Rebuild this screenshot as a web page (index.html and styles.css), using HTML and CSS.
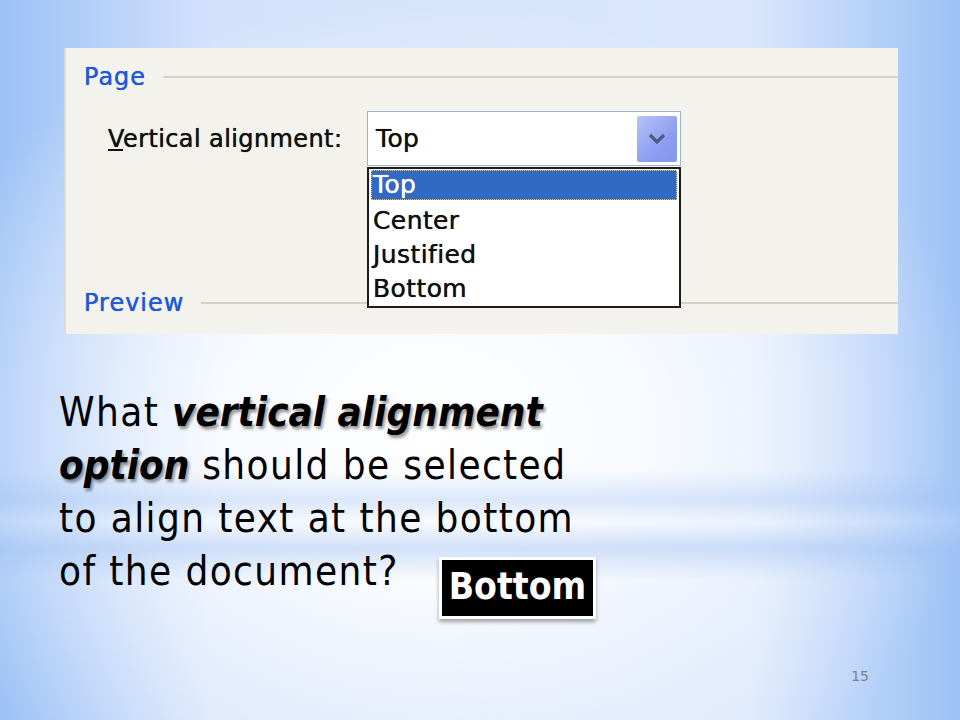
FILE: index.html
```html
<!DOCTYPE html>
<html lang="en">
<head>
<meta charset="UTF-8">
<title>Vertical alignment</title>
<link rel="stylesheet" href="styles.css">
</head>
<body>
    <div class="slide">
        <div class="dialog">
            <div class="group-title">
                <span>Page</span>
                <div class="group-line"></div>
            </div>
            <div class="field-row">
                <label class="field-label"><u>V</u>ertical alignment:</label>
                <div class="combo">
                    <span class="combo-value">Top</span>
                    <div class="combo-button">
                        <svg width="20" height="14" viewBox="0 0 20 14">
                            <path d="M3 3 L10 10 L17 3" fill="none" stroke="#4a5a80" stroke-width="3.2"/>
                        </svg>
                    </div>
                </div>
            </div>
            <div class="group-title preview-title">
                <span>Preview</span>
                <div class="group-line"></div>
            </div>

            <!-- open list of the combo box, drawn over the Preview line -->
            <ul class="combo-list">
                <li class="selected">Top</li>
                <li>Center</li>
                <li>Justified</li>
                <li>Bottom</li>
            </ul>
        </div>

        <p class="question">
            What <em>vertical alignment</em><br>
            <em>option</em> should be selected<br>
            to align text at the bottom<br>
            of the document?<span class="answer">Bottom</span>
        </p>

        <div class="slide-number">15</div>
    </div>
</body>
</html>
```

FILE: styles.css
```css
:root {
    --dialog-bg: #f3f2ec;
    --xp-blue: #2257d6;
    --select-blue: #316ac5;
    --ui-font: "DejaVu Sans", sans-serif;
}

body {
    margin: 0;
    background: #cfdffa;
}

.slide {
    width: 960px;
    height: 720px;
    box-sizing: border-box;
    padding-top: 48px;
    display: flex;
    flex-direction: column;
    overflow: hidden;
    background:
        linear-gradient(to bottom, rgba(255,255,255,0) 470px, rgba(160,192,242,0.35) 500px, rgba(235,242,253,0.15) 522px, rgba(160,192,242,0.45) 548px, rgba(255,255,255,0) 580px),
        radial-gradient(ellipse 560px 430px at 430px 430px, #ffffff 0%, rgba(255,255,255,0.85) 35%, rgba(255,255,255,0) 100%),
        linear-gradient(to right, #9cc1f6 0%, #d3e2fb 22%, #dae7fc 78%, #9cc1f6 100%);
}

/* screenshot of the Page Setup dialog */
.dialog {
    position: relative;
    margin-left: 64px;
    width: 834px;
    height: 286px;
    box-sizing: border-box;
    padding-top: 16px;
    background: var(--dialog-bg);
    border-left: 2px solid #dcdbd3;
    font-family: var(--ui-font);
    letter-spacing: 0.4px;
    text-shadow: 0 0 0.7px currentColor;
}

.group-title {
    display: flex;
    align-items: center;
    padding-left: 18px;
    font-size: 24px;
    line-height: 26px;
    letter-spacing: 1px;
    color: var(--xp-blue);
}

.group-line {
    flex: 1;
    height: 2px;
    margin-left: 17px;
    background: #d3d2c6;
}

.field-row {
    display: flex;
    align-items: center;
    margin-top: 21px;
    padding-left: 42px;
}

.field-label {
    width: 259px;
    font-size: 24px;
    color: #111;
}

.combo {
    display: flex;
    align-items: center;
    justify-content: space-between;
    width: 314px;
    height: 55px;
    box-sizing: border-box;
    padding: 0 3px 0 8px;
    background: #fff;
    border: 1px solid #9db2cc;
}

.combo-value {
    font-size: 25px;
    color: #111;
}

.combo-button {
    display: flex;
    align-items: center;
    justify-content: center;
    width: 40px;
    height: 46px;
    border-radius: 2px;
    background: linear-gradient(135deg, #b7c3f8 0%, #8e9ef1 60%, #8495ec 100%);
}

.preview-title {
    margin-top: 124px;
}

.combo-list {
    position: absolute;
    left: 301px;
    top: 119px;
    width: 314px;
    height: 141px;
    box-sizing: border-box;
    margin: 0;
    padding: 1px 2px;
    list-style: none;
    background: #fff;
    border: 2px solid #1c1c1c;
    font-size: 25px;
    color: #111;
}

.combo-list li {
    height: 34px;
    line-height: 34px;
    padding-left: 2px;
}

.combo-list li.selected {
    height: 30px;
    line-height: 30px;
    margin-bottom: 4px;
    background: var(--select-blue);
    color: #fff;
    outline: 1px dotted #d8c890;
    outline-offset: -1px;
}

/* question text */
.question {
    margin: 52px 0 0 59px;
    font-family: "DejaVu Sans Condensed", "DejaVu Sans", sans-serif;
    font-size: 40px;
    line-height: 53px;
    letter-spacing: 1.4px;
    color: #000;
}

.question em {
    font-weight: bold;
    letter-spacing: 0;
    text-shadow: 2px 3px 3px rgba(0,0,0,0.4);
}

.answer {
    display: inline-block;
    margin-left: 40px;
    height: 56px;
    padding: 0 7px;
    vertical-align: -14px;
    line-height: 54px;
    background: #000;
    color: #fff;
    font-weight: bold;
    font-size: 37px;
    letter-spacing: 0;
    border: 3px solid #fff;
    box-shadow: 0 3px 4px rgba(0,0,0,0.35);
}

.slide-number {
    margin-top: auto;
    align-self: flex-end;
    padding: 0 91px 36px 0;
    font-family: var(--ui-font);
    font-size: 14px;
    color: #7e828a;
}
```
